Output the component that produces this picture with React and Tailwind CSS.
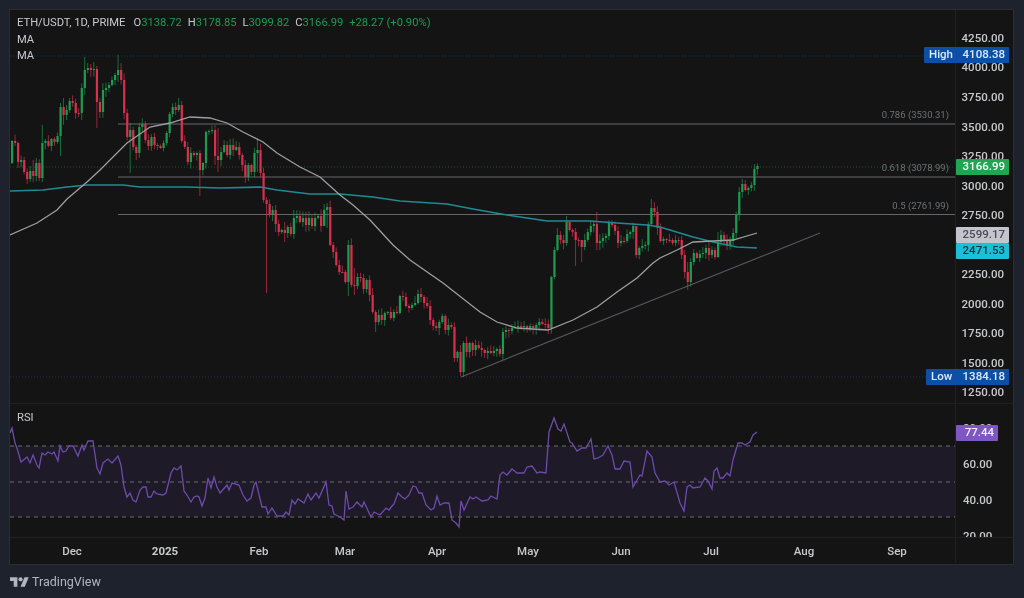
const GREEN = '#1d9c50'
const RED = '#d8304e'

// close of each daily candle, as a pixel y on the page
const closes = [
  141, 143, 162, 160, 172, 179, 171, 176, 163, 178, 143, 141, 146, 139, 142, 136, 107, 115, 110, 101,
  103, 113, 113, 88, 70, 68, 70, 69, 102, 112, 90, 88, 85, 80, 75, 70, 80, 113, 137, 130,
  147, 153, 127, 124, 140, 146, 137, 145, 146, 148, 143, 133, 114, 107, 110, 105, 141, 147, 162, 153,
  155, 153, 170, 163, 132, 131, 130, 156, 160, 152, 145, 155, 145, 150, 147, 155, 165, 177, 165, 172,
  153, 150, 173, 200, 204, 215, 210, 224, 232, 230, 233, 227, 234, 218, 216, 222, 218, 225, 218, 226,
  218, 216, 226, 210, 207, 245, 252, 265, 272, 272, 282, 245, 285, 286, 277, 278, 289, 280, 295, 312,
  322, 315, 320, 313, 312, 318, 312, 313, 296, 297, 306, 308, 305, 303, 294, 297, 303, 306, 320, 326,
  328, 322, 316, 330, 325, 327, 358, 352, 372, 343, 352, 343, 350, 345, 348, 350, 353, 351, 353, 351,
  349, 354, 332, 330, 331, 328, 327, 326, 327, 326, 329, 326, 328, 325, 322, 324, 324, 328, 277, 250,
  235, 240, 243, 222, 230, 232, 240, 240, 247, 240, 232, 226, 224, 243, 241, 238, 236, 222, 225, 231,
  243, 241, 241, 234, 232, 226, 255, 248, 246, 245, 224, 208, 212, 228, 241, 239, 240, 240, 243, 240,
  240, 255, 272, 282, 262, 253, 258, 254, 253, 248, 255, 250, 257, 242, 235, 240, 246, 241, 233, 215,
  192, 184, 190, 188, 185, 169, 166,
]

// candles whose wick is longer than usual: index -> [top, bottom]
const longWicks = {
  7: [160, 182], 10: [125, 182], 16: [103, 156], 17: [98, 125], 24: [57, 95], 28: [66, 128], 29: [98, 118],
  35: [55, 82], 39: [123, 173], 41: [145, 160], 55: [98, 112], 62: [150, 196], 67: [125, 165], 68: [128, 172],
  77: [160, 183], 81: [138, 172], 84: [197, 293], 87: [205, 232], 90: [222, 242], 93: [210, 239], 103: [204, 222],
  104: [203, 228], 111: [240, 296], 113: [268, 295], 120: [310, 332], 146: [322, 362], 148: [345, 376], 149: [341, 377],
  162: [328, 360], 186: [228, 266], 188: [240, 262], 193: [212, 250], 197: [220, 240], 206: [228, 258],
  211: [199, 226], 223: [262, 290], 233: [232, 258],
}

const candles = closes.map((close, i) => {
  const open = i === 0 ? 163 : closes[i - 1]
  const top = Math.min(open, close)
  const bottom = Math.max(open, close)
  const a = Math.abs(Math.sin(i * 12.9898) * 43758.5453) % 1
  const b = Math.abs(Math.sin(i * 78.233) * 12543.123) % 1
  const wick = longWicks[i] || [top - 1 - a * 6, bottom + 1 + b * 6]
  return { x: 12 + i * 3.03, top, bottom, up: close < open, wick }
})

const ma50 = '10,235 37,223 57,210 67,199 87,182 100,170 127,143 150,127 170,123 190,117 210,118 227,123 243,132 263,142 277,153 300,167 320,177 340,195 353,205 370,220 393,245 410,260 443,283 480,312 497,322 517,328 548,330 573,320 597,307 617,292 637,278 653,263 660,258 677,250 693,242 713,241 733,240 757,233'
const ma200 = '10,191 43,190 67,187 87,185 123,185 140,187 187,187 220,188 260,187 277,190 310,194 340,194 373,197 400,201 447,204 473,209 507,215 547,221 590,221 617,223 647,225 660,227 693,237 713,242 737,247 757,248'

const rsi = [
  [10, 433], [12, 428], [15, 443], [17, 448], [21, 462], [27, 457], [30, 463], [33, 455], [37, 465], [39, 468], [42, 453], [45, 455], [48, 452], [52, 454], [54, 452], [58, 461], [60, 446], [63, 452], [66, 451], [69, 446], [73, 446], [78, 456], [82, 445], [84, 450], [88, 441], [93, 441], [97, 468], [100, 474], [103, 463], [108, 459], [112, 463], [118, 456], [121, 465], [124, 487], [127, 497], [130, 493], [133, 500], [136, 502], [140, 490], [143, 487], [146, 487], [148, 497], [151, 497], [154, 491], [157, 494], [163, 495], [166, 493], [168, 485], [171, 473], [174, 468], [177, 470], [181, 466], [184, 491], [187, 495], [191, 502], [194, 497], [197, 496], [199, 497], [202, 506], [205, 498], [208, 478], [211, 488], [214, 477], [217, 487], [220, 493], [227, 485], [229, 490], [232, 483], [239, 485], [243, 495], [247, 501], [251, 498], [254, 485], [256, 482], [262, 507], [266, 507], [268, 514], [272, 508], [277, 516], [283, 516], [286, 512], [289, 515], [292, 500], [295, 504], [298, 499], [304, 503], [308, 494], [311, 500], [316, 493], [319, 498], [326, 482], [329, 505], [332, 506], [334, 514], [340, 517],
  [344, 520], [346, 491], [349, 509], [353, 507], [357, 502], [362, 507], [364, 502], [371, 517], [374, 512], [380, 515], [386, 508], [389, 510], [392, 506], [394, 504], [398, 493], [402, 497], [405, 499], [409, 495], [413, 486], [416, 487], [419, 493], [422, 493], [426, 505], [431, 510], [434, 508], [437, 496], [440, 505], [444, 503], [449, 503], [452, 520], [456, 523], [459, 527], [461, 501], [464, 510], [470, 497], [473, 499], [476, 497], [482, 501], [488, 500], [491, 496], [497, 499], [500, 475], [503, 472], [507, 475], [512, 469], [517, 473], [524, 473], [527, 467], [532, 466], [537, 473], [540, 472], [546, 473], [549, 432], [554, 418], [558, 429], [561, 431], [564, 424], [570, 442], [572, 443], [577, 451], [582, 448], [586, 448], [591, 439], [594, 459], [598, 458], [603, 455], [608, 446], [612, 455], [615, 469], [620, 469], [624, 461], [630, 462], [633, 487], [640, 475], [642, 476], [647, 451], [652, 457], [655, 473], [660, 482], [665, 481], [669, 485], [674, 482], [680, 503],
  [684, 511], [687, 487], [690, 485], [693, 488], [700, 487], [705, 478], [708, 481], [712, 489], [714, 471], [717, 468], [720, 478], [723, 478], [727, 473], [730, 476], [733, 460], [738, 443], [742, 443], [745, 445], [750, 442], [753, 435], [757, 432],
]

const months = [
  { label: 'Dec', x: 72 }, { label: '2025', x: 165, bold: true }, { label: 'Feb', x: 259 }, { label: 'Mar', x: 345 }, { label: 'Apr', x: 437 },
  { label: 'May', x: 528 }, { label: 'Jun', x: 621 }, { label: 'Jul', x: 711 }, { label: 'Aug', x: 804 }, { label: 'Sep', x: 897 },
]

// price scale of the main pane: y of a price, relative to the top of the frame
const priceY = (p) => 57.4 + (4000 - p) * 0.1182
const priceTicks = [4250, 4000, 3750, 3500, 3250, 3000, 2750, 2250, 2000, 1750, 1500, 1250]
const rsiTicks = [
  { value: 80, y: 24 }, { value: 60, y: 60 }, { value: 40, y: 96 }, { value: 20, y: 132 },
]
const fibs = [
  { label: '0.786 (3530.31)', y: 124 },
  { label: '0.618 (3078.99)', y: 177 },
  { label: '0.5 (2761.99)', y: 214.5 },
]

function Badge({ y, className, children }) {
  return (
    <div
      className={`absolute h-[16px] flex items-center pr-[4px] rounded-[1px] text-[11.5px] ${className}`}
      style={{ top: y - 8 }}
    >
      {children}
    </div>
  )
}

function Stat({ name, value }) {
  return (
    <span className="mr-[6px]">
      <span className="text-[#c8c9cc]">{name}</span>
      <span className="text-[#1d9c50]">{value}</span>
    </span>
  )
}

export default function App() {
  return (
    <div className="w-[1024px] h-[598px] bg-[#1e222d] flex flex-col font-[Roboto,sans-serif] overflow-hidden blur-[0.4px]">
      {/* Chart frame */}
      <div className="mt-[10px] ml-[10px] w-[1003px] h-[554px] bg-[#141414] flex flex-col outline outline-[#2a2d38]">
        {/* Price pane */}
        <div className="flex h-[394px] border-b border-[#202020]">
          <div className="relative w-[945px] h-full">
            <svg className="absolute inset-0" width="945" height="394" viewBox="10 10 945 394">
              <line x1="10" x2="955" y1="56" y2="56" stroke="#17324f" strokeDasharray="1 2" />
              <line x1="10" x2="955" y1="377" y2="377" stroke="#17324f" strokeDasharray="1 2" />
              <line x1="10" x2="955" y1="167" y2="167" stroke="#14532d" strokeDasharray="1 2" />
              {fibs.map((f) => (
                <line key={f.label} x1="118" x2="955" y1={f.y} y2={f.y} stroke="#66666c" strokeWidth="1.2" />
              ))}
              <line x1="461" y1="377" x2="820" y2="233" stroke="#55555b" strokeWidth="1.2" />
              {candles.map((c, i) => (
                <g key={i} fill={c.up ? GREEN : RED}>
                  <rect x={c.x - 0.5} y={c.wick[0]} width="1" height={c.wick[1] - c.wick[0]} opacity="0.65" />
                  <rect x={c.x - 1} y={c.top} width="2.2" height={Math.max(c.bottom - c.top, 1)} />
                </g>
              ))}
              <polyline points={ma200} fill="none" stroke="#1f8a93" strokeWidth="1.7" />
              <polyline points={ma50} fill="none" stroke="#9e9ea2" strokeWidth="1.3" />
            </svg>

            {/* Legend */}
            <div className="absolute left-[7px] top-[5px] flex flex-col text-[11.2px] leading-[16.5px] text-[#c8c9cc]">
              <div className="flex">
                <span className="mr-[8px]">ETH/USDT, 1D, PRIME</span>
                <Stat name="O" value="3138.72" />
                <Stat name="H" value="3178.85" />
                <Stat name="L" value="3099.82" />
                <Stat name="C" value="3166.99" />
                <span className="text-[#1d9c50]">+28.27 (+0.90%)</span>
              </div>
              <div>MA</div>
              <div>MA</div>
            </div>

            {/* Fibonacci labels */}
            {fibs.map((f) => (
              <div
                key={f.label}
                className="absolute right-[6px] text-[9.5px] leading-[12px] text-[#6f7178]"
                style={{ top: f.y - 25 }}
              >
                {f.label}
              </div>
            ))}
          </div>

          {/* Price axis */}
          <div className="relative w-[58px] h-full border-l border-[#202020] text-[11.5px] font-medium text-[#c8c9cc]">
            {priceTicks.map((p) => (
              <div
                key={p}
                className="absolute right-[9px] leading-[14px]"
                style={{ top: priceY(p) - 7 }}
              >
                {p}.00
              </div>
            ))}
            <Badge y={157} className="left-0 w-[53px] justify-end bg-[#1ea653] text-white">3166.99</Badge>
            <Badge y={225} className="left-0 w-[53px] justify-end bg-[#c3c4cc] text-[#4b4b50]">2599.17</Badge>
            <Badge y={240.5} className="left-0 w-[53px] justify-end bg-[#1cc0d6] text-[#10333a]">2471.53</Badge>
            <Badge y={45} className="-left-[32px] w-[85px] justify-between pl-[5px] bg-[#0b4fa6] text-[#dfe8f5]">
              <span>High</span>
              <span>4108.38</span>
            </Badge>
            <Badge y={367} className="-left-[30px] w-[83px] justify-between pl-[5px] bg-[#0b4fa6] text-[#dfe8f5]">
              <span>Low</span>
              <span>1384.18</span>
            </Badge>
          </div>
        </div>

        {/* RSI pane */}
        <div className="flex h-[134px] border-b border-[#202020]">
          <div className="relative w-[945px] h-full">
            <svg className="absolute inset-0" width="945" height="134" viewBox="10 404 945 134">
              <rect x="10" y="446" width="945" height="71" fill="#1e1a28" />
              {[446, 482, 517].map((y) => (
                <line key={y} x1="10" x2="955" y1={y} y2={y} stroke="#6b6b70" strokeDasharray="4 4" />
              ))}
              <polyline points={rsi.map((p) => p.join(',')).join(' ')} fill="none" stroke="#6d4bab" strokeWidth="1.3" />
            </svg>
            <div className="absolute left-[7px] top-[6px] text-[11.2px] leading-[16px] text-[#c8c9cc]">RSI</div>
          </div>
          <div className="relative w-[58px] h-full border-l border-[#202020] overflow-hidden text-[11.5px] font-medium text-[#c8c9cc]">
            {rsiTicks.map((t) => (
              <div
                key={t.value}
                className="absolute left-[7px] leading-[14px]"
                style={{ top: t.y - 7 }}
              >
                {t.value}.00
              </div>
            ))}
            <Badge y={29} className="left-0 w-[42px] justify-end bg-[#7e57c2] text-[#f0ecf8]">77.44</Badge>
          </div>
        </div>

        {/* Time axis */}
        <div className="flex h-[25px]">
          <div className="relative w-[945px] h-full text-[11.5px] font-medium text-[#c8c9cc]">
            {months.map((m) => (
              <div
                key={m.label}
                className={`absolute top-[6px] -translate-x-1/2 leading-[14px] ${m.bold ? 'font-bold' : ''}`}
                style={{ left: m.x - 10 }}
              >
                {m.label}
              </div>
            ))}
          </div>
          <div className="w-[58px] border-l border-[#202020]" />
        </div>
      </div>

      {/* Footer */}
      <div className="ml-[10px] mt-[10px] flex items-center gap-[3px]">
        <svg width="19" height="15" viewBox="0 0 36 28" fill="#b2b5be">
          <path d="M14 22H7V11H0V4h14v18zM28 22h-8l7.5-18h8L28 22z" />
          <circle cx="20" cy="8" r="4" />
        </svg>
        <span className="text-[12.5px] leading-[16px] text-[#b2b5be]">TradingView</span>
      </div>
    </div>
  )
}
